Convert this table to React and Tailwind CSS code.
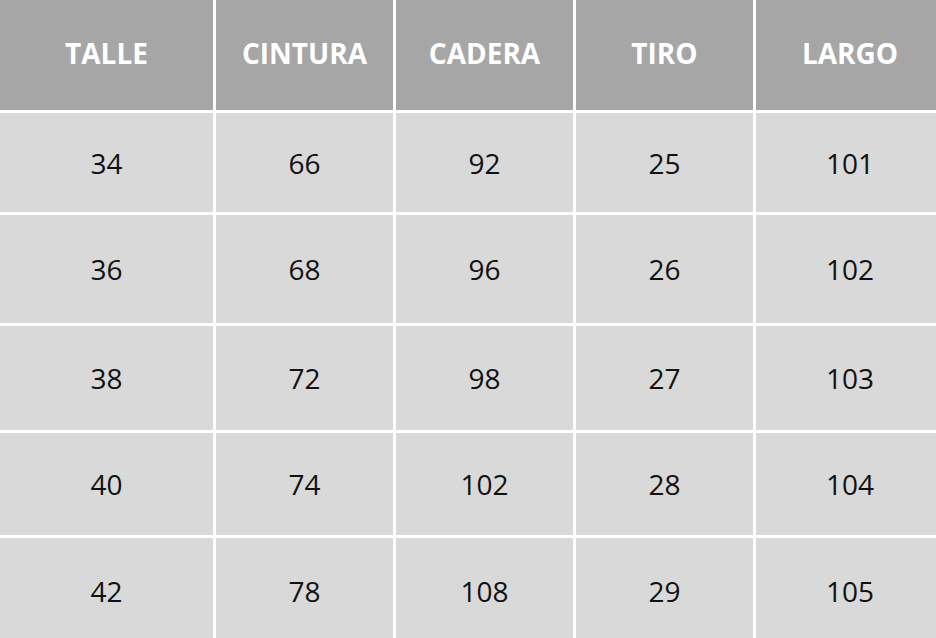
export default function App() {
  const headers = ["TALLE", "CINTURA", "CADERA", "TIRO", "LARGO"];
  const rows = [
    ["34", "66", "92", "25", "101"],
    ["36", "68", "96", "26", "102"],
    ["38", "72", "98", "27", "103"],
    ["40", "74", "102", "28", "104"],
    ["42", "78", "108", "29", "105"],
  ];
  return (
    <div className="w-[936px] h-[638px] overflow-hidden bg-white" style={{ fontFamily: '"Open Sans", sans-serif' }}>
      <div className="w-[944px] grid grid-cols-[213px_177px_177px_177px_188px] grid-rows-[110px_99px_108px_104px_102px_106px] gap-[3px] bg-white">
        {headers.map((h) => (
          <div key={h} className="bg-[#a6a6a6] flex items-center justify-center pb-[4px] text-white font-bold text-[28px]">
            {h}
          </div>
        ))}
        {rows.flatMap((r, i) =>
          r.map((c, j) => (
            <div key={i + "-" + j} className="bg-[#d9d9d9] flex items-center justify-center text-[#111] text-[28px]">
              {c}
            </div>
          ))
        )}
      </div>
    </div>
  );
}
